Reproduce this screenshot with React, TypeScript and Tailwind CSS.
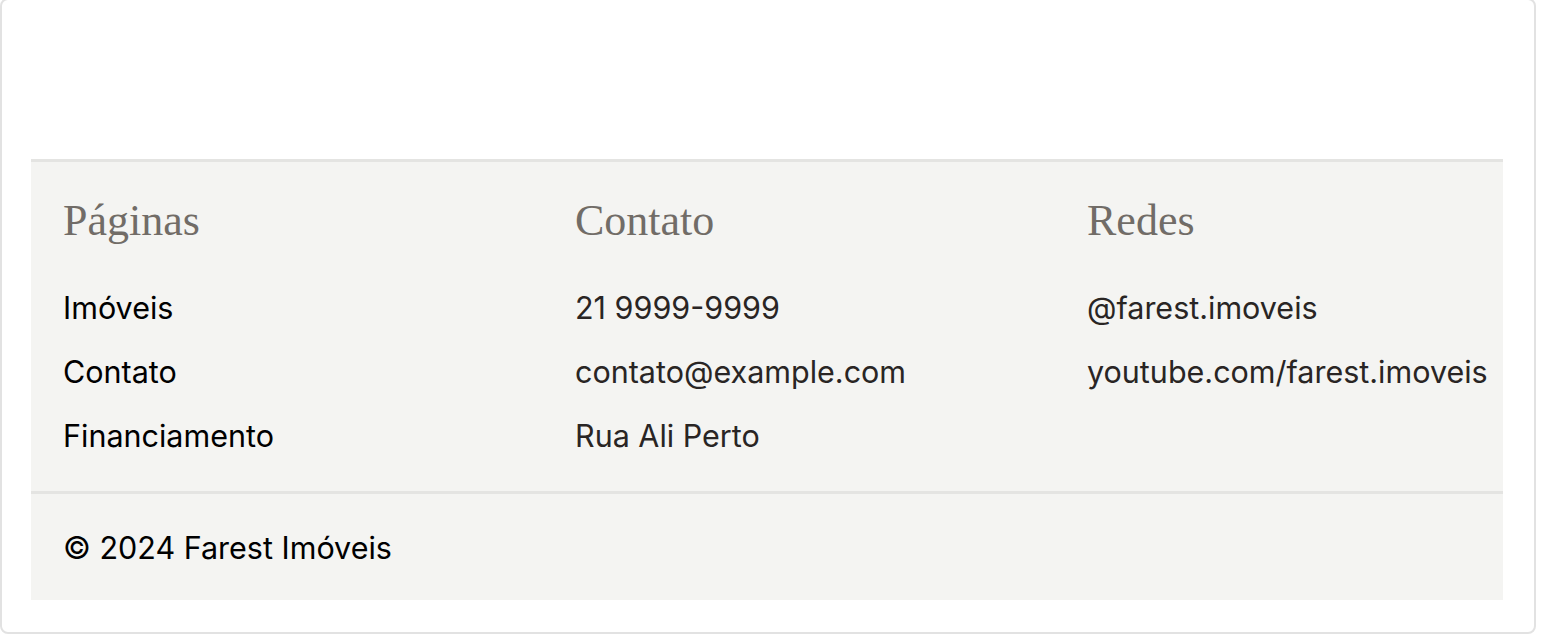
export default function App() {
  const pages = ["Imóveis", "Contato", "Financiamento"];
  const contact = ["21 9999-9999", "contato@example.com", "Rua Ali Perto"];
  const social = ["@farest.imoveis", "youtube.com/farest.imoveis"];

  return (
    <div className="min-h-screen bg-white font-['Inter',sans-serif]">
      <div className="w-[1536px] -mt-[2px] border-2 border-[#e2e2e2] rounded-lg bg-white pl-[29px] pr-[31px] pt-[159px] pb-[32px]">
        <footer className="bg-[#f4f4f2] border-t-[3px] border-[#e4e4e2]">
          <div className="grid grid-cols-3 gap-x-32 px-8 pt-[35px] pb-[35px]">
            <div>
              <h3 className="font-['Liberation_Serif',serif] text-[44px] leading-[48px] text-[#716c67]">
                Páginas
              </h3>
              <ul className="mt-[43px] flex flex-col gap-6">
                {pages.map((p) => (
                  <li key={p}>
                    <a href="#" className="text-[30.5px] leading-[40px] text-black whitespace-nowrap">
                      {p}
                    </a>
                  </li>
                ))}
              </ul>
            </div>
            <div>
              <h3 className="font-['Liberation_Serif',serif] text-[44px] leading-[48px] text-[#716c67]">
                Contato
              </h3>
              <ul className="mt-[43px] flex flex-col gap-6">
                {contact.map((c) => (
                  <li key={c} className="text-[30.5px] leading-[40px] text-[#292524] whitespace-nowrap">
                    {c}
                  </li>
                ))}
              </ul>
            </div>
            <div>
              <h3 className="font-['Liberation_Serif',serif] text-[44px] leading-[48px] text-[#716c67]">
                Redes
              </h3>
              <ul className="mt-[43px] flex flex-col gap-6">
                {social.map((s) => (
                  <li key={s} className="text-[30.5px] leading-[40px] text-[#292524] whitespace-nowrap">
                    {s}
                  </li>
                ))}
              </ul>
            </div>
          </div>
          <div className="border-t-[3px] border-[#e4e4e2] px-8 pt-[34px] pb-[32px]">
            <p className="text-[30.5px] leading-[40px] text-black">© 2024 Farest Imóveis</p>
          </div>
        </footer>
      </div>
    </div>
  );
}
